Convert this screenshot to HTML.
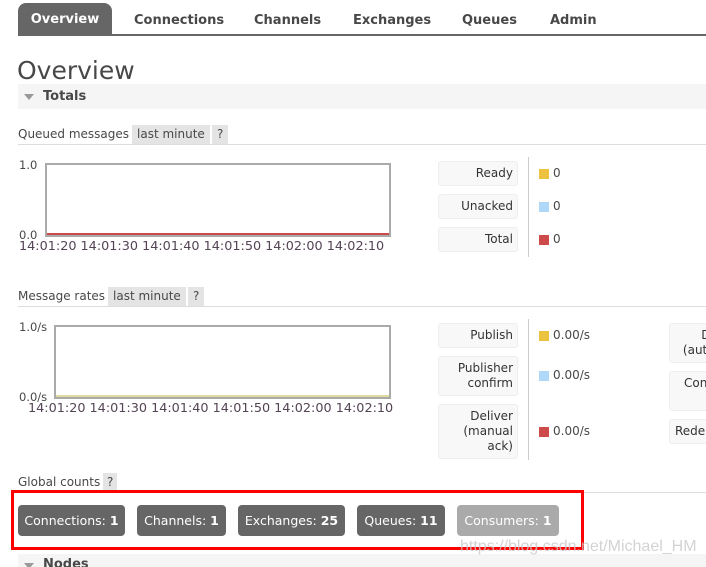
<!DOCTYPE html>
<html><head><meta charset="utf-8"><style>
*{margin:0;padding:0;box-sizing:border-box}
html,body{width:706px;height:567px;overflow:hidden}
body{background:#fff;font-family:"DejaVu Sans","Liberation Sans",sans-serif;color:#484848;position:relative;font-size:12px}
.a{position:absolute;white-space:nowrap}
.tab{position:absolute;top:5px;height:32px;line-height:32px;font-weight:bold;font-size:13px;color:#484848}
.tag{position:absolute;background:#e4e4e4;height:19px;line-height:19px;padding:0 5px;font-size:12px}
.lb{position:absolute;left:438px;width:80px;background:#f8f8f8;border:1px solid #eee;border-radius:3px;text-align:right;padding:4px 4px;font-size:12px;line-height:15px;color:#333}
.clip{position:absolute;left:669px;width:37px;overflow:hidden}
.lb2{width:80px;background:#f8f8f8;border:1px solid #eee;border-radius:3px;text-align:right;padding:4px 4px;font-size:12px;line-height:15px;color:#333}
.sw{position:absolute;width:10px;height:10px}
.btn{position:absolute;top:505px;height:31px;line-height:31px;border-radius:4px;background:#666;color:#fff;font-size:12.5px;text-align:center}
.small{font-size:11.5px}
.tm{font-size:12.8px}
</style></head><body>
<div class="a" style="left:18px;top:3px;width:94px;height:32px;background:#666;border-radius:8px 8px 0 0;color:#fff;font-weight:bold;font-size:13px;line-height:34px;text-align:center">Overview</div>
<div class="tab" style="left:134px">Connections</div>
<div class="tab" style="left:254px">Channels</div>
<div class="tab" style="left:353px">Exchanges</div>
<div class="tab" style="left:462px">Queues</div>
<div class="tab" style="left:550px">Admin</div>
<div class="a" style="left:18px;top:34px;width:688px;height:2px;background:#666"></div>
<div class="a" style="left:17px;top:56px;font-size:25px">Overview</div>
<div class="a" style="left:18px;top:84px;width:688px;height:25px;background:#f5f5f5"></div>
<div class="a" style="left:24px;top:94px;width:0;height:0;border-left:5px solid transparent;border-right:5px solid transparent;border-top:6px solid #999"></div>
<div class="a" style="left:43px;top:89px;font-weight:bold;font-size:13px">Totals</div>

<div class="a" style="left:18px;top:127px">Queued messages</div>
<div class="tag" style="left:132px;top:125px">last minute</div>
<div class="tag" style="left:212px;top:125px">?</div>
<div class="a" style="left:18px;top:144px;width:688px;height:1px;background:#ddd"></div>

<div class="a" style="left:45px;top:163px;width:346px;height:74px;border:2px solid #aaa"></div>
<div class="a" style="left:47px;top:233px;width:342px;height:2px;background:#cb4b4b"></div>
<div class="a small" style="left:19px;top:158px">1.0</div>
<div class="a small" style="left:19px;top:228px">0.0</div>
<div class="a tm" style="left:19px;top:239px;color:#545">14:01:20 14:01:30 14:01:40 14:01:50 14:02:00 14:02:10</div>

<div class="lb" style="top:161px;height:25px">Ready</div>
<div class="lb" style="top:194px;height:25px">Unacked</div>
<div class="lb" style="top:227px;height:25px">Total</div>
<div class="a" style="left:528px;top:157px;width:1px;height:100px;background:#ccc"></div>
<div class="sw" style="left:539px;top:169px;background:#edc240"></div><div class="a" style="left:553px;top:166px">0</div>
<div class="sw" style="left:539px;top:202px;background:#afd8f8"></div><div class="a" style="left:553px;top:199px">0</div>
<div class="sw" style="left:539px;top:235px;background:#cb4b4b"></div><div class="a" style="left:553px;top:232px">0</div>

<div class="a" style="left:18px;top:289px">Message rates</div>
<div class="tag" style="left:108px;top:287px">last minute</div>
<div class="tag" style="left:188px;top:287px">?</div>
<div class="a" style="left:18px;top:306px;width:688px;height:1px;background:#ddd"></div>

<div class="a" style="left:54px;top:325px;width:337px;height:74px;border:2px solid #aaa"></div>
<div class="a" style="left:56px;top:395px;width:333px;height:2px;background:#e0dca0"></div>
<div class="a small" style="left:19px;top:320px">1.0/s</div>
<div class="a small" style="left:19px;top:390px">0.0/s</div>
<div class="a tm" style="left:28px;top:401px;color:#545">14:01:20 14:01:30 14:01:40 14:01:50 14:02:00 14:02:10</div>

<div class="lb" style="top:323px;height:25px">Publish</div>
<div class="lb" style="top:356px;height:40px">Publisher<br>confirm</div>
<div class="lb" style="top:404px;height:55px">Deliver<br>(manual<br>ack)</div>
<div class="a" style="left:528px;top:319px;width:1px;height:141px;background:#ccc"></div>
<div class="sw" style="left:539px;top:331px;background:#edc240"></div><div class="a" style="left:553px;top:328px">0.00/s</div>
<div class="sw" style="left:539px;top:371px;background:#afd8f8"></div><div class="a" style="left:553px;top:368px">0.00/s</div>
<div class="sw" style="left:539px;top:427px;background:#cb4b4b"></div><div class="a" style="left:553px;top:424px">0.00/s</div>
<div class="clip" style="top:323px"><div class="lb2" style="height:40px">Deliver<br>(auto ack)</div></div>
<div class="clip" style="top:371px"><div class="lb2" style="height:40px;text-align:left;padding-left:14px">Consumer</div></div>
<div class="clip" style="top:419px"><div class="lb2" style="height:25px;text-align:left;padding-left:5px">Redelivered</div></div>

<div class="a" style="left:18px;top:475px">Global counts</div>
<div class="tag" style="left:103px;top:473px;padding:0 4px">?</div>
<div class="a" style="left:18px;top:492px;width:688px;height:1px;background:#ddd"></div>

<div class="btn" style="left:18px;width:107px">Connections: <b>1</b></div>
<div class="btn" style="left:137px;width:89px">Channels: <b>1</b></div>
<div class="btn" style="left:238px;width:107px">Exchanges: <b>25</b></div>
<div class="btn" style="left:357px;width:88px">Queues: <b>11</b></div>
<div class="btn" style="left:457px;width:102px;background:#aaa">Consumers: <b>1</b></div>
<div class="a" style="left:11px;top:490px;width:573px;height:60px;border:3px solid #f00"></div>

<div class="a" style="left:18px;top:554px;width:688px;height:13px;background:#f5f5f5"></div>
<div class="a" style="left:24px;top:563px;width:0;height:0;border-left:5px solid transparent;border-right:5px solid transparent;border-top:6px solid #999"></div>
<div class="a" style="left:43px;top:557px;font-weight:bold;font-size:13px">Nodes</div>
<div class="a" style="left:460px;top:538px;font-family:'Liberation Sans',sans-serif;font-size:16px;color:rgba(200,200,200,0.8)">https://blog.csdn.net/Michael_HM</div>
</body></html>
